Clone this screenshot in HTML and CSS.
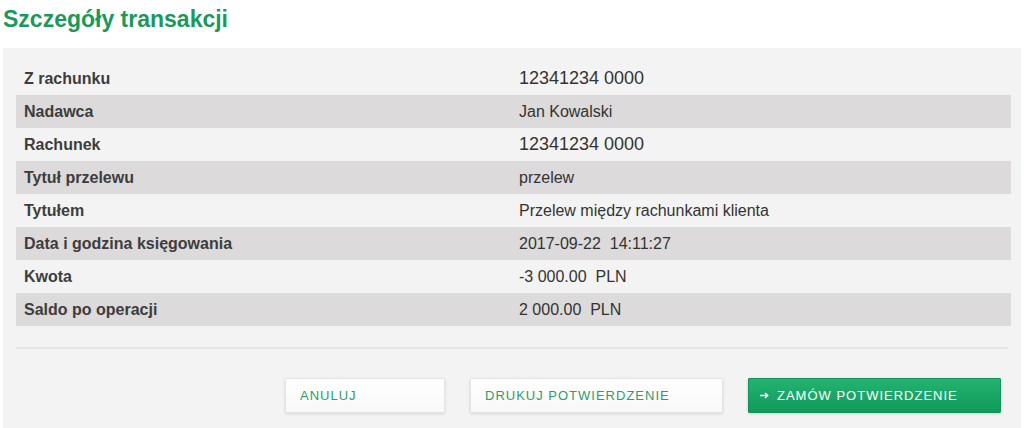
FILE: index.html
```html
<!DOCTYPE html>
<html lang="pl">
<head>
    <meta charset="UTF-8">
    <title>Szczegóły transakcji</title>
    <link rel="stylesheet" href="styles.css">
</head>
<body>
    <h1 class="page-title">Szczegóły transakcji</h1>

    <div class="panel">
        <div class="details">
            <div class="row">
                <span class="label">Z rachunku</span>
                <span class="value account">12341234 0000</span>
            </div>
            <div class="row">
                <span class="label">Nadawca</span>
                <span class="value">Jan Kowalski</span>
            </div>
            <div class="row">
                <span class="label">Rachunek</span>
                <span class="value account">12341234 0000</span>
            </div>
            <div class="row">
                <span class="label">Tytuł przelewu</span>
                <span class="value">przelew</span>
            </div>
            <div class="row">
                <span class="label">Tytułem</span>
                <span class="value">Przelew między rachunkami klienta</span>
            </div>
            <div class="row">
                <span class="label">Data i godzina księgowania</span>
                <span class="value">2017-09-22&nbsp;&nbsp;14:11:27</span>
            </div>
            <div class="row">
                <span class="label">Kwota</span>
                <span class="value">-3 000.00&nbsp;&nbsp;PLN</span>
            </div>
            <div class="row">
                <span class="label">Saldo po operacji</span>
                <span class="value">2 000.00&nbsp;&nbsp;PLN</span>
            </div>
        </div>

        <div class="separator"></div>

        <div class="actions">
            <a href="#" class="btn btn-light btn-small">Anuluj</a>
            <a href="#" class="btn btn-light">Drukuj potwierdzenie</a>
            <a href="#" class="btn btn-primary">
                <svg class="btn-arrow" width="9" height="7" viewBox="0 0 9 7">
                    <path d="M0 3.5H7.5M5 1L7.8 3.5L5 6" fill="none" stroke="#fff" stroke-width="1.3"/>
                </svg>
                Zamów potwierdzenie
            </a>
        </div>
    </div>
</body>
</html>
```

FILE: styles.css
```css
body {
    margin: 0;
    font-family: "Liberation Sans", Arial, sans-serif;
    background: #fff;
    color: #333;
}
.page-title {
    margin: 6px 0 15px 3px;
    font-size: 23px;
    line-height: normal;
    font-weight: bold;
    color: #1a995b;
}
.panel {
    margin: 0 3px 0 3px;
    padding: 14px 10px 40px 13px;
    background: #f3f3f3;
}
.row {
    display: grid;
    grid-template-columns: 503px 1fr;
    align-items: center;
    height: 33px;
}
.row:nth-child(even) {
    background: #dcdada;
}
.label {
    padding-left: 8px;
    font-size: 16px;
    font-weight: bold;
    color: #3d3d3d;
}
.value {
    font-size: 16px;
    color: #333;
}
.value.account {
    font-size: 18px;
}
.separator {
    height: 2px;
    margin: 21px 3px 0 0;
    background: #e6e6e6;
}
.actions {
    display: flex;
    justify-content: flex-end;
    gap: 25px;
    margin-top: 29px;
    padding-right: 10px;
}
.btn {
    display: flex;
    align-items: center;
    box-sizing: border-box;
    width: 253px;
    height: 35px;
    padding-left: 14px;
    font-size: 13px;
    letter-spacing: 1px;
    text-transform: uppercase;
    text-decoration: none;
    border-radius: 1px;
}
.btn-small {
    width: 160px;
}
.btn-light {
    color: #2a9e6b;
    background: linear-gradient(#ffffff, #f8f8f8);
    border: 1px solid #e4e4e4;
    box-shadow: 0 1px 3px rgba(0,0,0,0.12);
}
.btn-primary {
    padding-left: 11px;
    color: #fff;
    background: linear-gradient(#23b371, #119a5b);
    border: 1px solid #0f9356;
    box-shadow: 0 1px 3px rgba(0,0,0,0.15);
}
.btn-arrow {
    margin-right: 8px;
}
```
